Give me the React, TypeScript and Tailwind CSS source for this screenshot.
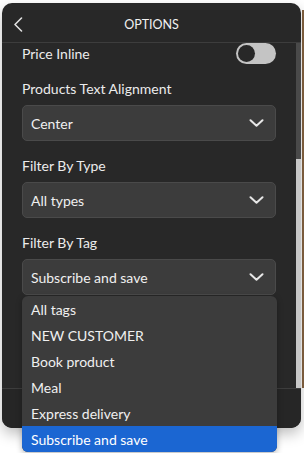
import React from 'react'

const font = { fontFamily: 'Lato, "Open Sans", "Liberation Sans", sans-serif' }

function Chevron() {
  return (
    <svg width="15" height="8" viewBox="0 0 15 8" fill="none" className="shrink-0">
      <polyline points="1.5,1.2 7.5,6.8 13.5,1.2" stroke="#e6e6e6" strokeWidth="2" strokeLinecap="round" strokeLinejoin="round" />
    </svg>
  )
}

function Field({ label, value }: { label?: string; value?: string }) {
  return (
    <div className="flex flex-col">
      <div className="h-5 leading-5 text-[14px] text-[#ececec] mb-[6px]">{label}</div>
      <div className="h-9 rounded-[5px] bg-[#3c3c3c] border border-[#4a4a4a] flex items-center justify-between pl-[8px] pr-[11px]">
        <span className="text-[14px] text-[#f0f0f0]">{value}</span>
        <Chevron />
      </div>
    </div>
  )
}

const tags = ['All tags', 'NEW CUSTOMER', 'Book product', 'Meal', 'Express delivery', 'Subscribe and save']

export default function App() {
  return (
    <div className="relative w-[304px] h-[453px] bg-white overflow-hidden flex pl-[2px] pt-[3px]" style={font}>
      <div className="w-[299px] h-[425px] rounded-[10px] bg-[#282828] flex flex-col overflow-hidden shadow-[0_6px_14px_rgba(0,0,0,0.25)]">
        {/* header */}
        <div className="h-[40px] shrink-0 border-b border-[#3d3d3d] relative flex items-center justify-center pt-[5px]">
          <svg width="10" height="15" viewBox="0 0 10 15" fill="none" className="absolute left-[11px] top-[14px]">
            <polyline points="8.5,1 2,7.5 8.5,14" stroke="#e0e0e0" strokeWidth="1.6" strokeLinecap="round" strokeLinejoin="round" />
          </svg>
          <span className="text-[12.5px] text-[#f2f2f2]">OPTIONS</span>
        </div>

        {/* body */}
        <div className="flex-1 flex overflow-hidden">
          <div className="flex-1 flex flex-col gap-[15px] pl-[20px] pr-[20px]">
            <div className="h-[21px] flex items-center justify-between">
              <span className="text-[14px] text-[#ececec]">Price Inline</span>
              <div className="w-10 h-[21px] rounded-full bg-[#c4c4c4] flex items-center pl-[2px]">
                <div className="w-[17px] h-[17px] rounded-full bg-[#282828]" />
              </div>
            </div>
            <Field label="Products Text Alignment" value="Center" />
            <Field label="Filter By Type" value="All types" />
            <Field label="Filter By Tag" value="Subscribe and save" />
            <Field />
          </div>
          <div className="w-[5px] bg-[#4a4a4a] flex flex-col">
            <div className="h-[116px]" />
            <div className="flex-1 bg-[#c8c8c8]" />
          </div>
        </div>

        {/* footer */}
        <div className="h-[40px] shrink-0 border-t border-[#3d3d3d] bg-[#262626]" />
      </div>
      <div className="w-[2px] h-[378px] mt-[7px] ml-px bg-[#7a5b3c]" />

      {/* open dropdown */}
      <div className="absolute left-[22px] top-[296px] w-[255px] rounded-[6px] bg-[#3c3c3c] overflow-hidden flex flex-col shadow-[0_2px_6px_rgba(0,0,0,0.3)]">
        {tags.map((t, i) => (
          <div
            key={t}
            className={
              i === tags.length - 1
                ? 'h-[26px] flex items-center pl-[9px] text-[14px] text-white bg-[#1b66d2]'
                : 'h-[26px] flex items-center pl-[9px] text-[14px] text-[#f0f0f0]'
            }
          >
            {t}
          </div>
        ))}
      </div>
    </div>
  )
}
